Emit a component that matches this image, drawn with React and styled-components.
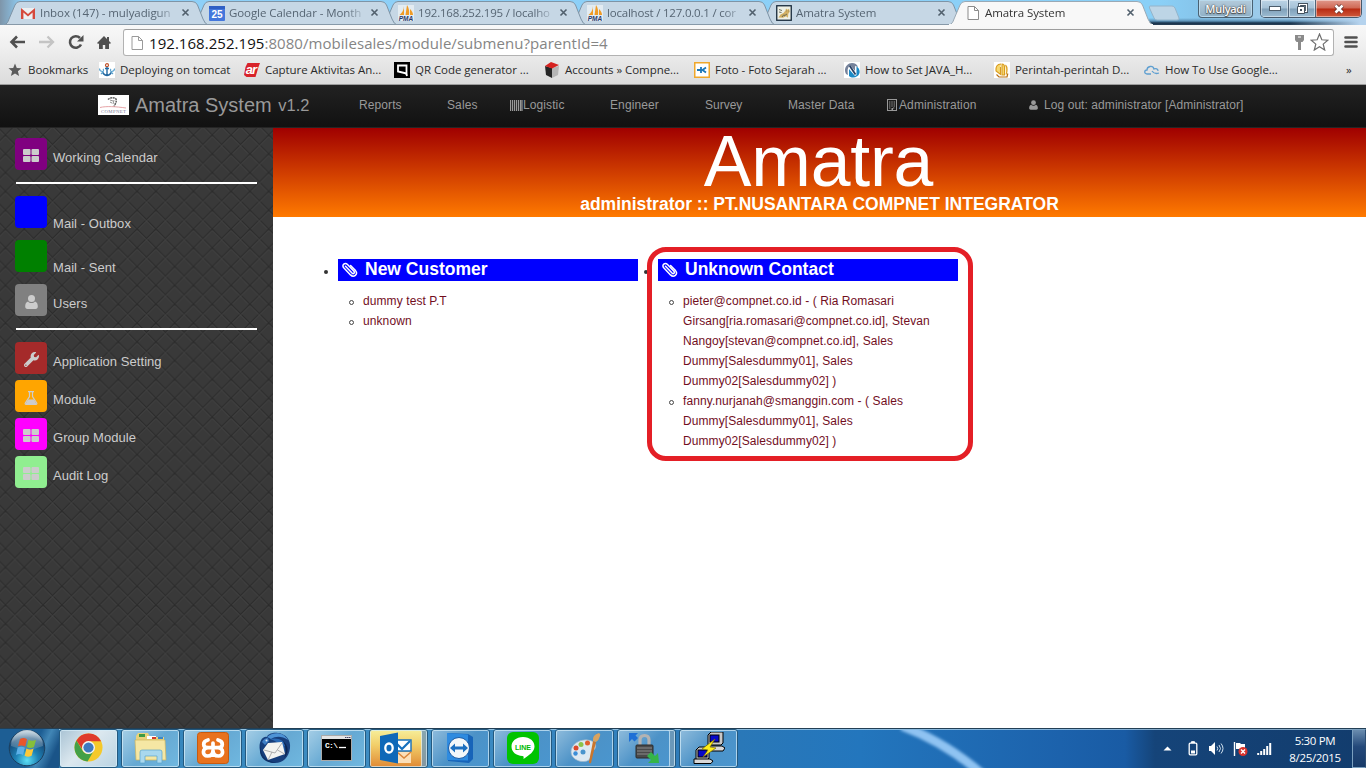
import React from 'react';
import styled, { createGlobalStyle } from 'styled-components';
import { FaWrench } from 'react-icons/fa';

const ui = `"Open Sans", "Noto Sans", sans-serif`;
const arial = `"Liberation Sans", Arial, sans-serif`;

const Global = createGlobalStyle`
  *, *::before { box-sizing: border-box; }
  body { margin: 0; background: #fff; overflow: hidden; }
  svg { display: block; }
`;

const Screen = styled.div`
  width: 1366px;
  height: 768px;
  display: flex;
  flex-direction: column;
  overflow: hidden;
  font-family: ${arial};
`;

/* ---------- browser window ---------- */

const TabStrip = styled.div`
  height: 25px;
  flex: none;
  display: flex;
  padding-left: 4px;
  background:
    linear-gradient(90deg, #7e95a9 0, rgba(140, 190, 220, 0) 22px),
    linear-gradient(90deg, rgba(181, 211, 238, 0) 1290px, #b5d3ee 1360px),
    linear-gradient(180deg, rgba(0, 0, 0, 0) 18px, #5e93b8 21px, #17324c 23px, #2b4257 25px) 1149px 0 / 217px 25px no-repeat,
    linear-gradient(90deg, #8fd0f8 0, #8ad0f7 1160px, #86c4ea 1200px, #9ccbea 1260px, #b5d3ee 1366px);
`;

const TabBox = styled.div`
  position: relative;
  z-index: ${(p) => p.$z};
  flex: none;
  width: 204px;
  height: 25px;
  margin-right: -15px;
  padding: 5px 0 0 16px;
  display: flex;
  align-items: flex-start;
`;

const TabShape = styled.svg`
  position: absolute;
  inset: 0;
  z-index: -1;
`;

const TabLabel = styled.span`
  width: 138px;
  margin-left: 4px;
  overflow: hidden;
  white-space: nowrap;
  font: 11.5px/16px ${ui};
  letter-spacing: ${(p) => p.$ls || -0.08}px;
  color: ${(p) => (p.$active ? '#333' : '#566573')};
  mask-image: linear-gradient(90deg, #000 ${(p) => (p.$fade ? '116px' : '138px')}, transparent 138px);
`;

const TabClose = styled.svg`
  margin: 3px 0 0 3px;
`;

const NewTab = styled.svg`
  margin: 5px 0 0 10px;
  flex: none;
`;

const UserBadge = styled.div`
  flex: none;
  width: 55px;
  height: 18px;
  margin-left: 17px;
  border: 1px solid #4a6172;
  border-top: 0;
  border-radius: 0 0 4px 4px;
  box-shadow: inset 0 0 0 1px #b9d9ec;
  background: linear-gradient(#b4cbdb, #8fb0c6);
  color: #fafafa;
  font: 600 11px/17px ${ui};
  letter-spacing: -0.3px;
  text-align: center;
  text-shadow: 0 0 2px #555, 0 0 1px #444, 0 1px 1px #444;
`;

const WindowButtons = styled.div`
  flex: none;
  display: flex;
  margin-left: 7px;
  height: 18px;
  border: 1px solid #46586a;
  border-top: 0;
  border-radius: 0 0 5px 5px;
  overflow: hidden;
`;

const WinButton = styled.div`
  width: ${(p) => p.$w}px;
  display: flex;
  align-items: center;
  justify-content: center;
  border-right: ${(p) => (p.$close ? 0 : '1px solid #50657a')};
  box-shadow: inset 0 0 0 1px rgba(255, 255, 255, 0.45);
  background: ${(p) =>
    p.$close
      ? 'linear-gradient(#e0998c 0, #cf6753 48%, #b82a12 52%, #cf5a3c 100%)'
      : 'linear-gradient(#bcd4e6 0, #a5c1d6 48%, #7f9fb8 52%, #9dbdd3 100%)'};
`;

const ToolArea = styled.div`
  flex: none;
  height: 60px;
  display: flex;
  flex-direction: column;
  background: linear-gradient(#f8f8f8, #f0f0f0 20px, #dcdcdc 58px);
  border-bottom: 1px solid #9c9c9c;
`;

const Toolbar = styled.div`
  display: flex;
  align-items: center;
  height: 34px;
  padding: 1px 0 0 9px;
`;

const NavIcon = styled.svg`
  flex: none;
  margin: 0 ${(p) => p.$gap}px 1px 0;
`;

const MenuIcon = styled.svg`
  margin: 0 0 1px 10px;
`;

const Omnibox = styled.div`
  display: flex;
  align-items: center;
  width: 1211px;
  height: 27px;
  padding: 0 4px 0 5px;
  border: 1px solid #b2b2b2;
  border-top-color: #9d9d9d;
  border-radius: 3px;
  background: #fff;
`;

const Url = styled.span`
  flex: 1;
  margin-left: 4px;
  font: 15px/24px ${ui};
  letter-spacing: 0.05px;
  color: #858585;
  b { font-weight: 400; color: #111; }
`;

const Bookmarks = styled.div`
  display: flex;
  align-items: center;
  height: 24px;
  padding-left: 7px;
`;

const Bookmark = styled.div`
  flex: none;
  width: ${(p) => p.$w}px;
  display: flex;
  align-items: center;
  padding-bottom: 2px;
  white-space: nowrap;
  font: 11.5px/16px ${ui};
  letter-spacing: -0.05px;
  color: #2a2a2a;
  svg { flex: none; margin-right: 5px; }
`;

/* ---------- application ---------- */

const NavBar = styled.nav`
  flex: none;
  height: 43px;
  display: flex;
  align-items: center;
  padding: 0 0 2px 98px;
  background: linear-gradient(#222, #111);
  border-bottom: 1px solid #252525;
  color: #999;
`;

const Brand = styled.div`
  width: 261px;
  display: flex;
  align-items: center;
  white-space: pre;
  font: 20px/24px ${arial};
  svg { margin-right: 6px; }
  small { font-size: 16.5px; margin-left: 2px; }
`;

const NavGrid = styled.div`
  display: grid;
  grid-template-columns: 88px 63px 100px 95px 83px 99px 142px auto;
`;

const NavItem = styled.div`
  display: flex;
  align-items: center;
  font: 12px/20px ${arial};
  letter-spacing: ${(p) => p.$ls || 0}px;
  svg { margin-right: ${(p) => p.$gap || 0}px; }
`;

const Body = styled.div`
  flex: 1;
  display: flex;
  min-height: 0;
`;

const Sidebar = styled.aside`
  position: relative;
  width: 273px;
  padding: 10px 16px 0 15px;
  background: #373737;
`;

const Weave = styled.svg`
  position: absolute;
  inset: 0;
`;

const SideGroup = styled.div`
  position: relative;
  display: flex;
  flex-direction: column;
  gap: ${(p) => p.$gap}px;
`;

const SideRule = styled.div`
  position: relative;
  height: 2px;
  margin: 12px 0 12px 1px;
  background: #fff;
`;

const SideItem = styled.div`
  display: flex;
  height: 32px;
`;

const Tile = styled.div`
  width: 32px;
  height: 32px;
  border-radius: 4px;
  display: flex;
  align-items: center;
  justify-content: center;
  padding-top: 3px;
  background: ${(p) => p.$c};
  color: #ccc;
`;

const SideText = styled.span`
  margin: ${(p) => (p.$low ? 18 : 10)}px 0 0 6px;
  font: 13px/20px ${arial};
  letter-spacing: 0.05px;
  color: #ccc;
`;

const Main = styled.main`
  flex: 1;
  background: #fff;
`;

const Banner = styled.header`
  height: 89px;
  display: flex;
  flex-direction: column;
  align-items: center;
  color: #fff;
  background: linear-gradient(#a00000, #ff7a00);
`;

const BannerTitle = styled.div`
  font: 71.5px/66px ${arial};
  letter-spacing: -0.2px;
  margin-right: 2px;
`;

const BannerSub = styled.div`
  font: bold 17.5px/20px ${arial};
`;

const Columns = styled.div`
  display: flex;
  gap: 20px;
  padding: 42px 0 0 65px;
`;

const Column = styled.section`
  position: relative;
  width: 300px;
`;

const OuterDot = styled.i`
  position: absolute;
  left: -14px;
  top: 11px;
  width: 4px;
  height: 4px;
  border-radius: 50%;
  background: #333;
`;

const ColumnHead = styled.h4`
  display: flex;
  align-items: center;
  height: 22px;
  margin: 0 0 10px;
  padding: 0 0 2px 3px;
  background: #00f;
  color: #fff;
  font: bold 17.5px/20px ${arial};
  svg { margin-right: 7px; }
`;

const List = styled.ul`
  margin: 0;
  padding: 0 0 0 25px;
  list-style: none;
  font: 12px/20px ${arial};
  color: #720e1e;
`;

const Entry = styled.li`
  position: relative;
  letter-spacing: 0.09px;
  &::before {
    content: '';
    position: absolute;
    left: -14px;
    top: 9px;
    width: 5px;
    height: 5px;
    border: 1px solid #444;
    border-radius: 50%;
  }
`;

const RedFrame = styled.div`
  position: absolute;
  left: -11px;
  top: -12px;
  width: 326px;
  height: 214px;
  border: 5px solid #e41f26;
  border-radius: 19px;
`;

/* ---------- taskbar ---------- */

const TaskbarBox = styled.footer`
  position: relative;
  flex: none;
  height: 40px;
  display: flex;
  align-items: stretch;
  border-top: 1px solid #233f55;
  box-shadow: inset 0 1px 0 rgba(190, 225, 245, 0.65);
  background: linear-gradient(90deg, #1c5d92 0, #3283b9 60px, #3f8ec4 420px, #2a78b8 740px, #2376bd 860px, #1c62ac 1060px, #195ba4 1125px, #154479 1155px, #123c6d 1366px);
`;

const Streak = styled.svg`
  position: absolute;
  left: 880px;
  top: 1px;
`;

const StartSlot = styled.div`
  width: 59px;
  padding: 0 0 0 7px;
  background: linear-gradient(115deg, #1d5e94 55%, #4186b6 68%, #1a5488 85%);
`;

const TaskButton = styled.div`
  flex: none;
  position: relative;
  width: 59px;
  margin: 0 3px 0 0;
  display: flex;
  align-items: center;
  justify-content: center;
  padding: 0 ${(p) => (p.$stack ? 5 : 0)}px 2px 0;
  border: 1px solid #23597f;
  border-radius: 3px;
  box-shadow: inset 0 0 0 1px rgba(215, 238, 250, 0.7)${(p) => (p.$stack ? ', inset -5px 0 0 rgba(25, 80, 125, .45), inset -6px 0 0 rgba(220,240,250,.7)' : '')};
  background: ${(p) =>
    p.$kind === 'active'
      ? 'linear-gradient(135deg, #a9c3d4, #dce8ef 45%, #b9d3e2)'
      : p.$kind === 'alert'
      ? 'linear-gradient(#f6ee9a, #f2cf6a 40%, #e08a35)'
      : p.$kind === 'deep'
      ? 'linear-gradient(135deg, #8fbcdc, #4c92c7 50%, #4a96cf)'
      : 'linear-gradient(135deg, #a5cee6, #66a9d3 50%, #70b8e0)'};
`;

const Tray = styled.div`
  position: relative;
  margin-left: auto;
  display: flex;
  align-items: center;
`;

const TrayIcon = styled.svg`
  margin-right: ${(p) => p.$gap}px;
`;

const Clock = styled.div`
  width: 60px;
  text-align: center;
  color: #fff;
  font: 11.5px/17px ${ui};
  letter-spacing: -0.35px;
`;

const ShowDesktop = styled.div`
  width: 14px;
  height: 39px;
  margin-left: 7px;
  border: 1px solid #7ba0bf;
  border-right-color: #2c4d72;
  background: linear-gradient(#6a8cae, #24497a 45%, #173a68);
`;

/* ---------- drawings ---------- */

const Gmail = () => (
  <svg width="16" height="16" viewBox="0 0 16 16">
    <path d="M1 3h14v11H1z" fill="#eceff1" />
    <path d="M1 14V3l7 6 7-6v11h-2.4V7.6L8 11.4 3.4 7.600V14z" fill="#d5493c" />
  </svg>
);
const Calendar = () => (
  <svg width="16" height="16" viewBox="0 0 16 16">
    <rect y="1" width="16" height="15" rx="1" fill="#4477dc" />
    <rect y="1" width="16" height="3" fill="#2f5fc4" />
    <text x="8" y="13" textAnchor="middle" fontFamily="Liberation Sans" fontWeight="bold" fontSize="10" fill="#fff">25</text>
  </svg>
);
const Pma = () => (
  <svg width="16" height="16" viewBox="0 0 16 16">
    <rect width="16" height="16" fill="#e3ecf2" />
    <path d="M6 1v9H1.500C4 8 6 5 6 1zM9 0c2 3 2.500 6 2 10H7.500zM12 4c2 2 3 4 3 6h-3z" fill="#f09b25" />
    <text x="8" y="15.600" textAnchor="middle" fontFamily="Liberation Sans" fontWeight="bold" fontStyle="italic" fontSize="6.500" fill="#2b3a6b">PMA</text>
  </svg>
);
const Tomcat = () => (
  <svg width="16" height="16" viewBox="0 0 16 16">
    <rect x=".750" y=".750" width="14.500" height="14.500" fill="#eef0e6" stroke="#15283a" strokeWidth="1.300" />
    <path d="M2.500 12.500l2-3 3-1.500 2-2.500.5-2 1.500 1.200 1.500-1 .8 3-1.500 2-.3 4-2-1.500-3 1.500z" fill="#d3b063" />
    <path d="M3 4.500l3 1M3 7l2.500.5M8 11l3-2M6 12l2-2.500M10.500 6h.5M12.500 6h.5" stroke="#5d6252" strokeWidth=".9" />
  </svg>
);
const Page = ({ c = '#8b8b8b' }) => (
  <svg width="16" height="16" viewBox="0 0 16 16">
    <path d="M3 1.500h6.500L13.500 5.500v9H3z" fill="#fff" stroke={c} />
    <path d="M9.500 1.500v4h4" fill="none" stroke={c} />
  </svg>
);
const Anchor = () => (
  <svg width="16" height="16" viewBox="0 0 16 16">
    <rect width="16" height="16" fill="#fff" />
    <circle cx="8" cy="3.200" r="1.500" fill="none" stroke="#c0542c" strokeWidth="1.200" />
    <path d="M8 5v9M6 6.500h4M3.500 9.500c.5 2.500 2 3.500 4.500 4 2.500-.5 4-1.500 4.500-4" fill="none" stroke="#2468a0" strokeWidth="1.400" />
    <path d="M.5 6.500c0 2 1 3 3 3 1 0 1.500-1.500.5-2.500M15.500 6.500c0 2-1 3-3 3-1 0-1.500-1.500-.5-2.500M2 12l2-2M14 12l-2-2" fill="none" stroke="#5ba3cf" strokeWidth="1.100" />
  </svg>
);
const RedAr = () => (
  <svg width="16" height="16" viewBox="0 0 16 16">
    <path d="M3.500 1H16l-1.500 4-3 10H2.500L0 13l1.500-8z" fill="#d8232a" />
    <text x="7" y="12" textAnchor="middle" fontFamily="Liberation Sans" fontWeight="bold" fontStyle="italic" fontSize="13" fill="#fff" letterSpacing="-1">ar</text>
  </svg>
);
const QrSite = () => (
  <svg width="16" height="16" viewBox="0 0 16 16">
    <rect width="16" height="16" fill="#000" />
    <path d="M4 3.500h8.500v8L4 9.500z" fill="none" stroke="#fff" strokeWidth="1.800" />
    <path d="M12 11l1 3" stroke="#fff" strokeWidth="1.800" />
  </svg>
);
const Cube = () => (
  <svg width="16" height="16" viewBox="0 0 16 16">
    <path d="M1 4l7 2v10l-6-3z" fill="#262626" />
    <path d="M8 6l7-2-1 9-6 3z" fill="#b5b5b5" />
    <path d="M1 4l6-4 8 3-7 3.500z" fill="#d6211f" />
  </svg>
);
const Kbox = () => (
  <svg width="16" height="16" viewBox="0 0 16 16">
    <rect x=".750" y=".750" width="14.500" height="14.500" fill="#fff" stroke="#f0a72a" strokeWidth="1.500" />
    <path d="M3 8h4M7 5v6M12 5.500L8.500 8l3.500 2.500" fill="none" stroke="#1a76b8" strokeWidth="1.800" />
  </svg>
);
const NetN = () => (
  <svg width="16" height="16" viewBox="0 0 16 16">
    <rect width="16" height="16" fill="#fff" />
    <path d="M2 12C-1 7 3 1 8 1c3 0 5 1.500 6 4l-3-1v5L6 3C4 5 3 8 4 13z" fill="#76839b" />
    <path d="M5 14V7l6 7 1.500-1V4.500c4 2.500 4 7 1 9.500-3 2-6 2-8.500 0z" fill="#1b8ac6" />
    <path d="M5.500 3.500l6 9" stroke="#2a4266" strokeWidth="1.800" />
  </svg>
);
const GoldBook = () => (
  <svg width="16" height="16" viewBox="0 0 16 16">
    <rect width="16" height="16" fill="#fff" />
    <path d="M7 2C3 2 1.500 5 2 9l4.500 3.500V5M8 2v11h2.500V5c0-2-.8-3-2.500-3zM11.500 3c2 2 2 7 .5 9.500" fill="#f7d970" stroke="#d99b20" strokeWidth="1.100" />
    <path d="M2.500 12.500L5 15h8l.8-3.500" fill="none" stroke="#b97012" strokeWidth="1.200" />
  </svg>
);
const Cloud = () => (
  <svg width="16" height="16" viewBox="0 0 16 16">
    <path d="M7 12H3c-3 0-3-4 0-4 0-4 6-5 7-1 2-1 4 0 4 2M8 9c2 3 4 3 7 2" fill="none" stroke="#5f9fd0" strokeWidth="1.300" />
  </svg>
);
const Star = () => (
  <svg width="16" height="16" viewBox="0 0 16 16">
    <path d="M8 1.500l1.800 4.500 4.700.3-3.600 3 1.200 4.700L8 11.400 3.900 14l1.200-4.700-3.600-3 4.700-.3z" fill="#5b5b5b" />
  </svg>
);

const Grid4 = () => (
  <svg width="16" height="13" viewBox="0 0 16 13">
    <g fill="currentColor">
      <rect width="7.500" height="6" rx="1" />
      <rect x="8.500" width="7.500" height="6" rx="1" />
      <rect y="7" width="7.500" height="6" rx="1" />
      <rect x="8.500" y="7" width="7.500" height="6" rx="1" />
    </g>
  </svg>
);
const Person = ({ w = 13, h = 14 }) => (
  <svg width={w} height={h} viewBox="0 0 13 14">
    <circle cx="6.500" cy="3.600" r="3.500" fill="currentColor" />
    <path d="M3 6.500C1 7 .2 9 .2 11.500.2 13 1 14 2.500 14h8c1.500 0 2.300-1 2.300-2.500 0-2.500-.8-4.500-2.800-5-1 1-2 1.500-3.500 1.500S4 7.500 3 6.500z" fill="currentColor" />
  </svg>
);
const Flask = () => (
  <svg width="14" height="14" viewBox="0 0 14 14">
    <path d="M4 .7h6M5.500 1v4.500L1.300 12c-.4.800 0 1.400.7 1.400h10c.7 0 1.100-.6.7-1.400L8.500 5.500V1" fill="none" stroke="currentColor" strokeWidth="1.200" />
    <path d="M4 8.500h6L12.500 13h-11z" fill="currentColor" />
  </svg>
);
const Clip = () => (
  <svg width="17" height="17" viewBox="0 0 17 17" fill="none" stroke="#fff" strokeWidth="1.500" strokeLinecap="round">
    <path d="M4.500 5.200L11 12c1.400 1.400 3.200-.2 1.900-1.700L6.500 3.500C4 .9.300 4 2.700 6.700l6.800 7.200c3.200 3.200 8-.6 5-4.300L9.600 4.500" />
  </svg>
);
const Barcode = () => (
  <svg width="13" height="11" viewBox="0 0 13 11">
    <path d="M.5 0v11M2.500 0v11M4.500 0v11M6.500 0v11M8.500 0v11M10.500 0v11M12 0v11" stroke="#999" strokeWidth="1.200" />
  </svg>
);
const Building = () => (
  <svg width="10" height="12" viewBox="0 0 10 12">
    <rect x=".5" y=".5" width="9" height="11" fill="none" stroke="#999" />
    <path d="M2 3h6M2 5h6M2 7h6M2 9h2M6 9h2" stroke="#999" strokeDasharray="1.400 .9" />
    <path d="M4.500 9v2.500h1.500V9" fill="#999" />
  </svg>
);
const Compnet = () => (
  <svg width="31" height="20" viewBox="0 0 31 20">
    <rect width="31" height="20" fill="#fff" />
    <path d="M10 4.500c1.500-2 6-2.500 8-.5 1 3-1 5-2 7.500" fill="none" stroke="#555" strokeWidth="1.400" strokeDasharray="2 .6" />
    <path d="M12 5l3 1M12 7l2 1M16 5l-1 4" stroke="#777" strokeWidth=".8" />
    <path d="M2 12.500c6-1.500 16-1 26 .5" fill="none" stroke="#e3989c" strokeWidth=".9" />
    <text x="15.500" y="17.500" textAnchor="middle" fontFamily="Liberation Serif" fontSize="4.800" fill="#777b99" textLength="25">COMPNET</text>
  </svg>
);

const StartOrb = () => (
  <svg width="40" height="38" viewBox="0 0 40 38">
    <defs>
      <radialGradient id="orb" cx=".5" cy=".85" r=".8">
        <stop offset="0" stopColor="#5de0f5" /><stop offset=".4" stopColor="#1e82b6" /><stop offset=".8" stopColor="#164a78" /><stop offset="1" stopColor="#8ba5b8" />
      </radialGradient>
      <linearGradient id="orbTop" x2="0" y2="1"><stop stopColor="#dbe6ee" stopOpacity=".85" /><stop offset="1" stopColor="#7fa0b8" stopOpacity=".3" /></linearGradient>
    </defs>
    <circle cx="20" cy="19" r="17.800" fill="url(#orb)" stroke="#1b3f5e" />
    <path d="M4 17A16 16 0 0 1 36 17Q20 24 4 17z" fill="url(#orbTop)" />
    <path d="M13 10c3-1.500 5-1 7 .2l-1.800 7.300c-2.500-1.300-5-1.500-7.200-.3z" fill="#e8562a" />
    <path d="M21.500 10.800c2.500 1.300 5 1.200 7.500 0L27 18c-2.500 1.300-5 1.200-7.200 0z" fill="#86bf3a" />
    <path d="M10.700 18.600c2.500-1.200 5-1 7.200.2L16 26c-2.300-1.300-4.800-1.300-7 0z" fill="#5cb0e8" />
    <path d="M19.400 19.500c2.500 1.300 5 1.200 7.200 0l-2 7.200c-2.500 1.300-4.700 1.200-7 0z" fill="#fcc93a" />
  </svg>
);
const ChromeIcon = () => (
  <svg width="29" height="29" viewBox="0 0 30 30">
    <circle cx="15" cy="15" r="14.500" fill="#f5c92b" />
    <path d="M2.500 7.700A14.500 14.500 0 0 1 28 8.500H15a6.600 6.600 0 0 0-6.300 8.500z" fill="#df3a2c" />
    <path d="M2.500 7.700A14.500 14.500 0 0 0 14 29.500l6.300-10.800a6.600 6.600 0 0 1-11.500-.6z" fill="#44a047" />
    <circle cx="15" cy="15" r="6.700" fill="#f3f6f8" />
    <circle cx="15" cy="15" r="5.300" fill="#3f7ac0" />
  </svg>
);
const Explorer = () => (
  <svg width="34" height="32" viewBox="0 0 34 32">
    <path d="M2 4l2-3h10l2 4h14v23H2z" fill="#e9d27c" />
    <path d="M5 2h6v3H5z" fill="#3e9a44" /><path d="M13 4h9v3h-9z" fill="#fff" /><path d="M18 5h4v2h-4z" fill="#d13a2a" /><path d="M24 5h5v2h-5z" fill="#3a86c8" />
    <path d="M1 8h30l1 20H2z" fill="#f5e7a4" stroke="#cfb55c" strokeWidth=".7" />
    <path d="M6 31V20q0-2 2-2h18q2 0 2 2v11h-5v-7H11v7z" fill="#a9d8ee" stroke="#5aa5cc" strokeWidth=".7" />
  </svg>
);
const Xampp = () => (
  <svg width="32" height="32" viewBox="0 0 32 32">
    <rect x=".5" y=".5" width="31" height="31" rx="3" fill="#e8721e" stroke="#c75a10" />
    <path d="M11 8C5 9.500 5.500 15.500 11 15.700h10C26.500 15.500 27 9.500 21 8M11 15.700C5 16 5 24 10.500 24c4 0 5.500-2.500 5.500-5.500 0 3 1.500 5.500 5.500 5.500 5.500 0 5.500-8-.5-8.300M16 15.700V11" fill="none" stroke="#fff" strokeWidth="3.700" strokeLinecap="round" strokeLinejoin="round" />
  </svg>
);
const Thunderbird = () => (
  <svg width="34" height="32" viewBox="0 0 34 32">
    <path d="M2 19C0 9 5 4 9 5c0-2 5-5 11-4 8 1 13 7 12 15-1 9-7 15-15 15C9 31 4 26 2 19z" fill="#173f7c" />
    <path d="M9 5c5-5 16-6 21 3-6-4-12-4-17-1z" fill="#4d93d6" />
    <path d="M12 7c8-2 14 1 17 8l-3-1c1 3 1 5 0 8C24 14 19 9 12 7z" fill="#2b69b4" />
    <path d="M5 18l5-7 14-1 3 12-17 6z" fill="#f4f4f1" />
    <path d="M6 18l11 3 7-10M10 28l4-8M26.500 22l-7-4" fill="none" stroke="#9d9d9d" strokeWidth=".8" />
    <path d="M3 13c-1 8 3 14 9 16l6 2C7 32-1 24 3 13z" fill="#0f3166" />
    <path d="M25 9c6 5 6 12 1 17 3-6 2-11-1-17z" fill="#0b2552" />
    <path d="M4 10q2-4 6-4l1 3-4 4z" fill="#3f7fc6" />
    <circle cx="8.500" cy="8.500" r="1" fill="#dfe9f5" />
  </svg>
);
const Console = () => (
  <svg width="31" height="26" viewBox="0 0 31 26">
    <rect x=".5" y=".5" width="30" height="25" fill="#000" stroke="#aaa" />
    <rect x="1" y="1" width="29" height="3" fill="#e4e4e4" /><path d="M24 2.500h1.500M26 2.500h1.500M28 2.500h1.500" stroke="#446" />
    <text x="4" y="12.500" fontFamily="Liberation Mono" fontWeight="bold" fontSize="8" fill="#fff" textLength="13">C:\</text>
    <path d="M18 12.500h7" stroke="#fff" strokeWidth="1.300" />
  </svg>
);
const Outlook = () => (
  <svg width="32" height="32" viewBox="0 0 32 32">
    <path d="M15 8h16v11H15z" fill="#fff" stroke="#1670bd" strokeWidth="1.400" /><path d="M17 12l5 5 8-8" fill="none" stroke="#1670bd" strokeWidth="2.200" />
    <path d="M17 20h14v11H17z" fill="#fbdfb8" /><path d="M17 20l7 6 7-6" fill="none" stroke="#d9853a" strokeWidth="1.500" />
    <path d="M0 4l18-3.500v31L0 28z" fill="#0f68b8" />
    <ellipse cx="9" cy="16" rx="3.700" ry="4.500" fill="none" stroke="#fff" strokeWidth="2.300" />
  </svg>
);
const TeamViewer = () => (
  <svg width="29" height="32" viewBox="0 0 29 32">
    <path d="M2 1l20 1 5 3v22l-4 4-21-2z" fill="#1764b9" /><path d="M1 1l21 1.500v26L1 28z" fill="#2e8be0" />
    <circle cx="13" cy="16" r="10.500" fill="#f3f7fa" stroke="#1a5ba5" />
    <path d="M4 16l5-4.500v3h8v-3l5 4.500-5 4.500v-3H9v3z" fill="#1c6fc0" />
  </svg>
);
const Line = () => (
  <svg width="32" height="32" viewBox="0 0 32 32">
    <rect width="32" height="32" rx="6" fill="#00c300" />
    <path d="M16 5c7 0 11.500 4.300 11.500 9.500 0 5-5 8.500-11 12.500.3-2 .3-3-1-3C9 23.500 4.500 20 4.500 14.500 4.500 9.300 9 5 16 5z" fill="#fff" />
    <text x="16" y="17.500" textAnchor="middle" fontFamily="Liberation Sans" fontWeight="bold" fontSize="7" fill="#00b900" textLength="16">LINE</text>
  </svg>
);
const Paint = () => (
  <svg width="34" height="32" viewBox="0 0 34 32">
    <path d="M3 20C3 12 12 7 20 8c8 1 10 7 5 11-3 3-1 6-4 9-6 4-18 0-18-8z" fill="#dde9f2" stroke="#9ab4c8" strokeWidth=".7" />
    <circle cx="8" cy="16" r="2.500" fill="#d9482c" /><circle cx="13" cy="12.500" r="2.500" fill="#8bc34a" /><circle cx="19.500" cy="11" r="2.500" fill="#e0602f" /><circle cx="7.500" cy="21.500" r="2.200" fill="#3b8ed8" /><circle cx="15" cy="20" r="2.500" fill="#4a94cc" />
    <path d="M25 9l3 1-5 21q-2 1-2-1z" fill="#c9762e" /><path d="M25 9q-1-6 6-8 2 1 1 3-1 4-4 6z" fill="#d9a35f" />
  </svg>
);
const LockSync = () => (
  <svg width="32" height="32" viewBox="0 0 32 32">
    <path d="M12 15V8q0-4.500 4.500-4.500T21 8v7" fill="none" stroke="#b3b3b3" strokeWidth="3.200" />
    <rect x="8" y="13" width="17" height="13" rx="1" fill="#4a4a4a" stroke="#2a2a2a" /><path d="M9 16h15M9 19h15M9 22h15" stroke="#8a8a8a" />
    <path d="M1 1h9L7.500 3.500 10 6 6.500 9.500 4 7 1 10z" fill="#1f6fd6" />
    <path d="M31 31H20l3-3-4-4 4-4 4 4 3-3z" fill="#35b548" />
  </svg>
);
const Putty = () => (
  <svg width="32" height="32" viewBox="0 0 32 32">
    <g stroke="#000">
      <path d="M15 3l3-3h12v11l-2 2H15z" fill="#c8c8c8" /><rect x="17" y="3" width="9" height="7" fill="#0808c8" /><path d="M13 14h16l3 2-2 3H13z" fill="#d8d8d8" />
      <path d="M3 18l3-3h10v11l-2 2H3z" fill="#c8c8c8" /><rect x="5" y="18" width="9" height="7" fill="#0808c8" /><path d="M1 27h16l3 2-2 2.500H1z" fill="#d8d8d8" />
    </g>
    <path d="M22 7l-13 10 6 1-5 7 13-9-6-1z" fill="#ffee1a" stroke="#7a6a00" strokeWidth=".7" />
  </svg>
);

const tabs = [
  { label: 'Inbox (147) - mulyadigun', icon: <Gmail />, fade: true },
  { label: 'Google Calendar - Month', icon: <Calendar />, fade: true },
  { label: '192.168.252.195 / localho', icon: <Pma />, fade: true, ls: -0.2 },
  { label: 'localhost / 127.0.0.1 / cor', icon: <Pma />, fade: true, ls: -0.2 },
  { label: 'Amatra System', icon: <Tomcat /> },
  { label: 'Amatra System', icon: <Page />, active: true },
];

const bookmarks = [
  { label: 'Bookmarks', icon: <Star />, w: 92 },
  { label: 'Deploying on tomcat', icon: <Anchor />, w: 145 },
  { label: 'Capture Aktivitas An...', icon: <RedAr />, w: 150 },
  { label: 'QR Code generator ...', icon: <QrSite />, w: 150 },
  { label: 'Accounts » Compne...', icon: <Cube />, w: 150 },
  { label: 'Foto - Foto Sejarah ...', icon: <Kbox />, w: 150 },
  { label: 'How to Set JAVA_H...', icon: <NetN />, w: 150 },
  { label: 'Perintah-perintah D...', icon: <GoldBook />, w: 150 },
  { label: 'How To Use Google...', icon: <Cloud />, w: 202 },
];

const tasks = [
  { icon: <ChromeIcon />, kind: 'active' },
  { icon: <Explorer /> },
  { icon: <Xampp /> },
  { icon: <Thunderbird /> },
  { icon: <Console /> },
  { icon: <Outlook />, kind: 'alert', stack: true },
  { icon: <TeamViewer />, kind: 'deep' },
  { icon: <Line />, kind: 'deep' },
  { icon: <Paint />, kind: 'deep' },
  { icon: <LockSync />, kind: 'deep', stack: true },
  { icon: <Putty />, kind: 'deep' },
];

function Tab({ tab, index }) {
  return (
    <TabBox $z={tab.active ? 20 : 10 - index}>
      <TabShape width="204" height="25" viewBox="0 0 204 25">
        <path
          d="M0 25C3 24 4 22 5 19L11 5Q12.500 1.500 16 1.500H188Q192 1.500 193.500 5L199 19Q201 24 204 25Z"
          fill={tab.active ? '#f8f8f8' : '#c6d7e5'}
          stroke={tab.active ? '#9aa9b5' : '#7e94a6'}
          strokeWidth="1"
        />
        <path d="M0 24.700H204" stroke={tab.active ? '#f8f8f8' : '#8799a8'} strokeWidth="1.200" />
      </TabShape>
      {tab.icon}
      <TabLabel $fade={tab.fade} $active={tab.active} $ls={tab.ls}>{tab.label}</TabLabel>
      <TabClose width="9" height="9" viewBox="0 0 9 9">
        <path d="M1.500 1.500l6 6M7.500 1.500l-6 6" stroke="#51606d" strokeWidth="1.600" />
      </TabClose>
    </TabBox>
  );
}

function Browser() {
  return (
    <>
      <TabStrip>
        {tabs.map((t, i) => <Tab key={i} tab={t} index={i} />)}
        <NewTab width="33" height="16" viewBox="0 0 33 16">
          <path d="M2 1H24Q26 1 27 3L31 13Q31.500 15 29 15H9Q7 15 6 13L1.500 3Q1 1 2 1Z" fill="#bdd5e6" stroke="#94b4ca" />
        </NewTab>
        <UserBadge>Mulyadi</UserBadge>
        <WindowButtons>
          <WinButton $w={28}><svg width="12" height="5"><rect x=".5" y=".5" width="11" height="4" fill="#fff" stroke="#4d5d6b" /></svg></WinButton>
          <WinButton $w={27}>
            <svg width="12" height="12" viewBox="0 0 12 12"><path d="M3.500 1.500h7v7h-7z" fill="none" stroke="#44525f" strokeWidth="3" /><path d="M3.500 1.500h7v7h-7z" fill="none" stroke="#fff" strokeWidth="1.200" /><path d="M1.500 3.500h7v7h-7z" fill="#fff" stroke="#44525f" /><path d="M4 6h2v2H4z" fill="#44525f" /></svg>
          </WinButton>
          <WinButton $w={45} $close>
            <svg width="12" height="10" viewBox="0 0 12 10"><path d="M2.500 1.500l7 7M9.500 1.500l-7 7" stroke="#5a2a26" strokeWidth="4" /><path d="M2.500 1.500l7 7M9.500 1.500l-7 7" stroke="#fff" strokeWidth="2.600" /></svg>
          </WinButton>
        </WindowButtons>
      </TabStrip>
      <ToolArea>
        <Toolbar>
          <NavIcon $gap={13} width="17" height="14" viewBox="0 0 17 14"><path d="M8 1.500L2.500 7 8 12.500M2.500 7H16" fill="none" stroke="#505050" strokeWidth="2.600" /></NavIcon>
          <NavIcon $gap={13} width="16" height="14" viewBox="0 0 16 14"><path d="M8.500 1.500L14 7l-5.500 5.500M14 7H0" fill="none" stroke="#c4c4c4" strokeWidth="2.300" /></NavIcon>
          <NavIcon $gap={13} width="16" height="16" viewBox="0 0 16 16"><path d="M13 10.500A5.800 5.800 0 1 1 12 4" fill="none" stroke="#505050" strokeWidth="2.600" /><path d="M15.500 1v6.500H9z" fill="#505050" /></NavIcon>
          <NavIcon $gap={12} width="14" height="15" viewBox="0 0 14 15"><path d="M7 1L0 8l1.200 1L2 8.300V14h3.800v-4h2.400v4H12V8.300l.8.700L14 8l-2-2V2h-2v2z" fill="#505050" /></NavIcon>
          <Omnibox>
            <Page c="#9a9a9a" />
            <Url><b>192.168.252.195</b>:8080/mobilesales/module/submenu?parentId=4</Url>
            <NavIcon $gap={5} width="11" height="15" viewBox="0 0 11 15"><path d="M1 0h9v5L8.500 7H7v8H4V7H2.500L1 5z" fill="#8a8a8a" /><path d="M4 2h3" stroke="#fff" /></NavIcon>
            <NavIcon $gap={0} width="19" height="18" viewBox="0 0 19 18"><path d="M9.500 1l2.300 5.800 6 .4-4.600 3.900 1.500 5.900-5.200-3.300L4.300 17l1.500-5.900L1.200 7.200l6-.4z" fill="#fff" stroke="#6f6f6f" strokeWidth="1.200" /></NavIcon>
          </Omnibox>
          <MenuIcon width="14" height="14" viewBox="0 0 14 14"><path d="M1.500 2.500h11M1.500 7h11M1.500 11.500h11" stroke="#505050" strokeWidth="2.600" strokeLinecap="round" /></MenuIcon>
        </Toolbar>
        <Bookmarks>
          {bookmarks.map((b) => <Bookmark key={b.label} $w={b.w}>{b.icon}{b.label}</Bookmark>)}
          <Bookmark $w={10}>»</Bookmark>
        </Bookmarks>
      </ToolArea>
    </>
  );
}

const SideRow = ({ color, icon, children, low }) => (
  <SideItem><Tile $c={color}>{icon}</Tile><SideText $low={low}>{children}</SideText></SideItem>
);

function Side() {
  return (
    <Sidebar>
      <Weave width="273" height="601">
        <defs>
          <pattern id="weave" width="18.800" height="18.800" patternUnits="userSpaceOnUse" patternTransform="translate(5.500 7)">
            <rect width="18.800" height="18.800" fill="#393939" />
            <path d="M0 0L18.800 18.800M18.800 0L0 18.800" stroke="#2b2b2b" strokeWidth="1.200" />
            <path d="M0 1.500L17.300 18.800M18.800 1.500L1.500 18.800" stroke="#444" strokeWidth=".8" />
          </pattern>
        </defs>
        <rect width="273" height="601" fill="url(#weave)" />
      </Weave>
      <SideGroup $gap={6}>
        <SideRow color="purple" icon={<Grid4 />}>Working Calendar</SideRow>
      </SideGroup>
      <SideRule />
      <SideGroup $gap={12}>
        <SideRow color="blue" low>Mail - Outbox</SideRow>
        <SideRow color="green" low>Mail - Sent</SideRow>
        <SideRow color="gray" icon={<Person />}>Users</SideRow>
      </SideGroup>
      <SideRule />
      <SideGroup $gap={6}>
        <SideRow color="brown" icon={<FaWrench size={15} />}>Application Setting</SideRow>
        <SideRow color="orange" icon={<Flask />}>Module</SideRow>
        <SideRow color="magenta" icon={<Grid4 />}>Group Module</SideRow>
        <SideRow color="lightgreen" icon={<Grid4 />}>Audit Log</SideRow>
      </SideGroup>
    </Sidebar>
  );
}

function Application() {
  return (
    <>
      <NavBar>
        <Brand><Compnet />Amatra System<small> v1.2</small></Brand>
        <NavGrid>
          <NavItem $ls={0.1}>Reports</NavItem>
          <NavItem $ls={0.1}>Sales</NavItem>
          <NavItem $ls={0.1}><Barcode />Logistic</NavItem>
          <NavItem $ls={0.1}>Engineer</NavItem>
          <NavItem>Survey</NavItem>
          <NavItem $ls={0.1}>Master Data</NavItem>
          <NavItem $gap={2} $ls={0.1}><Building />Administration</NavItem>
          <NavItem $gap={6} $ls={0.07}><Person w={9} h={10} />Log out: administrator [Administrator]</NavItem>
        </NavGrid>
      </NavBar>
      <Body>
        <Side />
        <Main>
          <Banner>
            <BannerTitle>Amatra</BannerTitle>
            <BannerSub>administrator :: PT.NUSANTARA COMPNET INTEGRATOR</BannerSub>
          </Banner>
          <Columns>
            <Column>
              <OuterDot />
              <ColumnHead><Clip />New Customer</ColumnHead>
              <List>
                <Entry>dummy test P.T</Entry>
                <Entry>unknown</Entry>
              </List>
            </Column>
            <Column>
              <OuterDot />
              <RedFrame />
              <ColumnHead><Clip />Unknown Contact</ColumnHead>
              <List>
                <Entry>pieter@compnet.co.id - ( Ria Romasari Girsang[ria.romasari@compnet.co.id], Stevan Nangoy[stevan@compnet.co.id], Sales Dummy[Salesdummy01], Sales Dummy02[Salesdummy02] )</Entry>
                <Entry>fanny.nurjanah@smanggin.com - ( Sales Dummy[Salesdummy01], Sales Dummy02[Salesdummy02] )</Entry>
              </List>
            </Column>
          </Columns>
        </Main>
      </Body>
    </>
  );
}

function Taskbar() {
  return (
    <TaskbarBox>
      <Streak width="120" height="39">
        <defs><filter id="soft"><feGaussianBlur stdDeviation="1.800" /></filter></defs>
        <path d="M22-4Q65 12 102 44" fill="none" stroke="#8fc3f2" strokeWidth="9" filter="url(#soft)" />
      </Streak>
      <StartSlot><StartOrb /></StartSlot>
      {tasks.map((t, i) => <TaskButton key={i} $kind={t.kind} $stack={t.stack}>{t.icon}</TaskButton>)}
      <Tray>
        <TrayIcon $gap={16} width="9" height="5" viewBox="0 0 9 5"><path d="M.5 4.500L4.500.5l4 4z" fill="#fff" /></TrayIcon>
        <TrayIcon $gap={10} width="10" height="15" viewBox="0 0 10 15"><path d="M3.500 2V.7h3V2" fill="#fff" stroke="#fff" /><rect x="1.200" y="2.200" width="7.600" height="11.600" rx="1" fill="none" stroke="#fff" strokeWidth="1.300" /><path d="M3 9.500h4v3H3z" fill="#fff" /></TrayIcon>
        <TrayIcon $gap={9} width="16" height="15" viewBox="0 0 16 15"><path d="M1 5h2l4-4v13L3 10H1z" fill="#fff" /><path d="M9 5.500q1.500 2 0 4M11 4q3 3.500 0 7M13 2.500q4 5 0 10" fill="none" stroke="#cfe0ee" /></TrayIcon>
        <TrayIcon $gap={9} width="15" height="16" viewBox="0 0 15 16"><path d="M1.500 1v14" stroke="#fff" strokeWidth="1.400" /><path d="M3 2h4l1 1h4v6H8L7 8H3z" fill="#fff" /><circle cx="10" cy="10.500" r="4.500" fill="#d8332c" /><path d="M8 8.500l4 4M12 8.500l-4 4" stroke="#fff" strokeWidth="1.400" /></TrayIcon>
        <TrayIcon $gap={13} width="15" height="12" viewBox="0 0 15 12"><path d="M1.200 12v-2M4.200 12V8M7.200 12V6M10.200 12V3M13.200 12V0" stroke="#fff" strokeWidth="2" /></TrayIcon>
        <Clock>5:30 PM<br />8/25/2015</Clock>
        <ShowDesktop />
      </Tray>
    </TaskbarBox>
  );
}

export default function App() {
  return (
    <Screen>
      <Global />
      <Browser />
      <Application />
      <Taskbar />
    </Screen>
  );
}
